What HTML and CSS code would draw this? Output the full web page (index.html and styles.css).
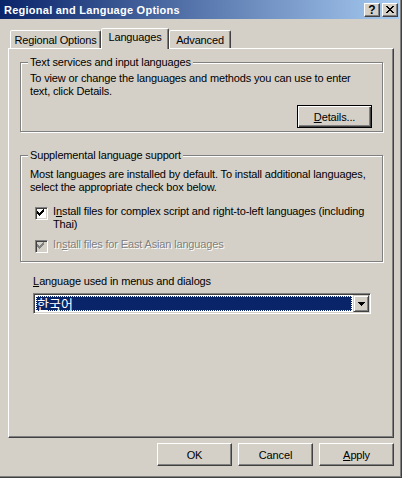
FILE: index.html
```html
<!DOCTYPE html>
<html lang="en">
  <head>
    <meta charset="UTF-8" />
    <title>Regional and Language Options</title>
    <link rel="stylesheet" href="styles.css">
  </head>
  <body>
    <div class="window">
      <div class="titlebar">
        <span class="title">Regional and Language Options</span>
        <div class="caption-btns">
          <span class="cap-btn help">?</span>
          <span class="cap-btn">
            <svg width="8" height="7" viewBox="0 0 8 7" shape-rendering="crispEdges">
              <path d="M0 0h2v1h-2zM6 0h2v1h-2zM1 1h2v1h-2zM5 1h2v1h-2zM2 2h4v1h-4zM3 3h2v1h-2zM2 4h4v1h-4zM1 5h2v1h-2zM5 5h2v1h-2zM0 6h2v1h-2zM6 6h2v1h-2z" fill="#000"/>
            </svg>
          </span>
        </div>
      </div>

      <div class="tabs">
        <div class="tab tab-regional">Regional Options</div>
        <div class="tab tab-languages active">Languages</div>
        <div class="tab tab-advanced">Advanced</div>
      </div>

      <div class="panel">
        <div class="group group-services">
          <span class="legend">Text services and input languages</span>
          <p>To view or change the languages and methods you can use to enter text, click Details.</p>
          <div class="group-actions">
            <button class="btn btn-default"><u>D</u>etails...</button>
          </div>
        </div>

        <div class="group group-supplemental">
          <span class="legend">Supplemental language support</span>
          <p>Most languages are installed by default. To install additional languages, select the appropriate check box below.</p>
          <div class="check-row row-complex">
            <span class="checkbox">
              <svg width="9" height="9" viewBox="0 0 9 9" shape-rendering="crispEdges">
                <path d="M6 0h1v3h-1zM5 1h1v3h-1zM4 2h1v3h-1zM3 3h1v3h-1zM2 4h1v3h-1zM1 3h1v3h-1zM0 2h1v3h-1z" fill="#000"/>
              </svg>
            </span>
            <label class="check-label">
              <span class="line">I<u>n</u>stall files for complex script and right-to-left languages (including</span>
              <span class="line">Thai)</span>
            </label>
          </div>
          <div class="check-row row-eastasian disabled">
            <span class="checkbox">
              <svg width="9" height="9" viewBox="0 0 9 9" shape-rendering="crispEdges">
                <path d="M6 0h1v3h-1zM5 1h1v3h-1zM4 2h1v3h-1zM3 3h1v3h-1zM2 4h1v3h-1zM1 3h1v3h-1zM0 2h1v3h-1z" fill="#808080"/>
              </svg>
            </span>
            <label class="check-label">In<u>s</u>tall files for East Asian languages</label>
          </div>
        </div>

        <div class="field">
          <div class="field-label"><u>L</u>anguage used in menus and dialogs</div>
          <div class="combo">
            <div class="combo-value"><span>한국어</span></div>
            <span class="combo-btn">
              <svg width="7" height="4" viewBox="0 0 7 4" shape-rendering="crispEdges">
                <path d="M0 0h7v1h-7zM1 1h5v1h-5zM2 2h3v1h-3zM3 3h1v1h-1z" fill="#000"/>
              </svg>
            </span>
          </div>
        </div>
      </div>

      <div class="footer">
        <button class="btn">OK</button>
        <button class="btn">Cancel</button>
        <button class="btn"><u>A</u>pply</button>
      </div>
    </div>
  </body>
</html>
```

FILE: styles.css
```css
body {
  margin: 0;
  background-color: #d4d0c8;
  font-family: "Liberation Sans", Arial, sans-serif;
  font-size: 11px;
  letter-spacing: -0.15px;
  color: #000;
}

u {
  letter-spacing: 0;
}

.window {
  width: 402px;
  height: 478px;
  box-sizing: border-box;
  display: flex;
  flex-direction: column;
  background-color: #d4d0c8;
  border-right: 1px solid #404040;
  border-bottom: 1px solid #404040;
  box-shadow: inset -1px -1px #808080;
}

/* title bar */

.titlebar {
  height: 19px;
  margin-right: 2px;
  padding: 0 1px 0 4px;
  display: flex;
  align-items: center;
  justify-content: space-between;
  background: linear-gradient(to right, #0a246a, #a6caf0);
  color: #fff;
  font-weight: bold;
  letter-spacing: 0.25px;
}

.caption-btns {
  display: flex;
  gap: 2px;
}

.cap-btn {
  width: 16px;
  height: 14px;
  box-sizing: border-box;
  display: flex;
  align-items: center;
  justify-content: center;
  background-color: #d4d0c8;
  border: 1px solid;
  border-color: #fff #404040 #404040 #fff;
  box-shadow: inset -1px -1px #808080;
  color: #000;
  font-size: 12px;
  font-weight: bold;
  line-height: 12px;
  letter-spacing: 0;
}

/* tabs */

.tabs {
  height: 20px;
  margin-top: 9px;
  padding-left: 10px;
  display: flex;
  align-items: flex-end;
}

.tab {
  height: 18px;
  box-sizing: border-box;
  padding-top: 3px;
  text-align: center;
  line-height: 13px;
  border: 1px solid;
  border-bottom: none;
  border-color: #fff #404040 transparent #fff;
  border-radius: 2px 2px 0 0;
  box-shadow: inset -1px 0 #808080;
  background-color: #d4d0c8;
}

.tab-regional { width: 91px; }
.tab-languages { width: 68px; }
.tab-advanced { width: 62px; }

.tab.active {
  height: 21px;
  margin-bottom: -1px;
  padding-top: 2px;
  position: relative;
  z-index: 1;
}

/* panel */

.panel {
  width: 386px;
  height: 390px;
  margin-left: 8px;
  box-sizing: border-box;
  padding: 13px 10px 0 11px;
  display: flex;
  flex-direction: column;
  border: 1px solid;
  border-color: #fff #404040 #404040 #fff;
  box-shadow: inset -1px -1px #808080;
}

.group {
  position: relative;
  width: 363px;
  box-sizing: border-box;
  border: 1px solid #808080;
  box-shadow: inset 1px 1px #fff, 1px 1px #fff;
}

.group p {
  margin: 0;
  line-height: 13px;
}

.legend {
  position: absolute;
  top: -7px;
  left: 7px;
  padding: 0 2px;
  line-height: 13px;
  background-color: #d4d0c8;
}

.group-services {
  height: 70px;
  padding: 9px 10px 0 9px;
}

.group-actions {
  margin-top: 7px;
  display: flex;
  justify-content: flex-end;
}

.group-supplemental {
  height: 107px;
  margin-top: 23px;
  padding: 12px 8px 0 9px;
}

.check-row {
  display: flex;
  align-items: flex-start;
  gap: 5px;
  padding-left: 5px;
}

.row-complex { margin-top: 11px; }
.row-eastasian { margin-top: 7px; }

.checkbox {
  width: 13px;
  height: 13px;
  flex-shrink: 0;
  margin-top: 2px;
  box-sizing: border-box;
  display: flex;
  align-items: center;
  justify-content: center;
  background-color: #fff;
  border: 1px solid;
  border-color: #808080 #fff #fff #808080;
  box-shadow: inset 1px 1px #404040, inset -1px -1px #d4d0c8;
}

.check-label {
  width: 318px;
  line-height: 13px;
}

.check-label .line {
  display: block;
  white-space: nowrap;
}

.disabled .checkbox {
  background-color: #d4d0c8;
}

.disabled .check-label {
  color: #808080;
  text-shadow: 1px 1px #fff;
}

/* language combo */

.field {
  margin: 13px 0 0 13px;
}

.field-label {
  line-height: 13px;
}

.combo {
  width: 338px;
  height: 21px;
  margin-top: 5px;
  box-sizing: border-box;
  display: flex;
  background-color: #fff;
  border: 1px solid;
  border-color: #808080 #fff #fff #808080;
  box-shadow: inset 1px 1px #404040, inset -1px -1px #d4d0c8;
  padding: 1px;
}

.combo-value {
  flex: 1;
  margin: 1px;
  display: flex;
  align-items: center;
  background-color: #0a246a;
  outline: 1px dotted #fff;
  outline-offset: -1px;
  color: #fff;
  font-family: "Noto Sans CJK KR", sans-serif;
  font-size: 13px;
  letter-spacing: 0;
}

.combo-value span {
  padding-left: 1px;
  line-height: 15px;
}

.combo-btn {
  width: 16px;
  height: 17px;
  box-sizing: border-box;
  display: flex;
  align-items: center;
  justify-content: center;
  background-color: #d4d0c8;
  border: 1px solid;
  border-color: #d4d0c8 #404040 #404040 #d4d0c8;
  box-shadow: inset 1px 1px #fff, inset -1px -1px #808080;
}

/* buttons */

.btn {
  width: 75px;
  height: 23px;
  box-sizing: border-box;
  padding: 0;
  font-family: inherit;
  font-size: 11px;
  letter-spacing: inherit;
  color: #000;
  background-color: #d4d0c8;
  border: 1px solid;
  border-color: #fff #404040 #404040 #fff;
  box-shadow: inset -1px -1px #808080;
  border-radius: 0;
}

.btn-default {
  border-color: #000;
  box-shadow: inset 1px 1px #fff, inset -1px -1px #404040, inset -2px -2px #808080;
}

.footer {
  width: 386px;
  margin: 5px 0 0 8px;
  display: flex;
  justify-content: flex-end;
  gap: 6px;
}
```
